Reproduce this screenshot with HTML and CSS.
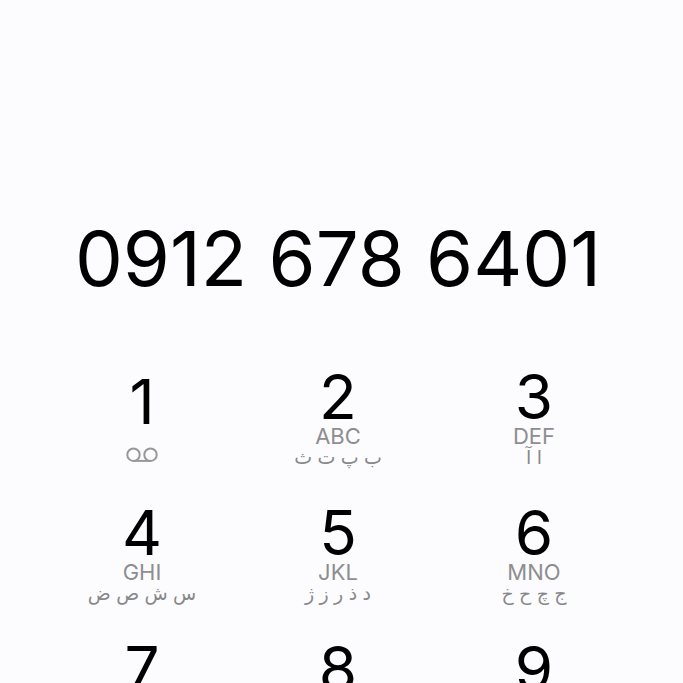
FILE: index.html
```html
<!DOCTYPE html>
<html lang="en">
<head>
<meta charset="utf-8">
<meta name="viewport" content="width=device-width, initial-scale=1">
<title>Phone</title>
<link rel="stylesheet" href="styles.css">
</head>
<body>
<main class="dialer">
  <output class="number">0912 678 6401</output>
  <div class="keypad">
    <button class="key key-voicemail" type="button">
      <span class="digit">1</span>
      <svg class="voicemail" viewBox="0 0 32 16" aria-hidden="true"><circle cx="7.5" cy="7.7" r="6.2"/><circle cx="24.5" cy="7.7" r="6.2"/><path d="M7.5 13.9h17"/></svg>
    </button>
    <button class="key" type="button"><span class="digit">2</span><span class="latin">ABC</span><span class="persian" lang="fa" dir="rtl">ب پ ت ث</span></button>
    <button class="key" type="button"><span class="digit">3</span><span class="latin">DEF</span><span class="persian" lang="fa" dir="rtl">ا آ</span></button>
    <button class="key" type="button"><span class="digit">4</span><span class="latin">GHI</span><span class="persian" lang="fa" dir="rtl">س ش ص ض</span></button>
    <button class="key" type="button"><span class="digit">5</span><span class="latin">JKL</span><span class="persian" lang="fa" dir="rtl">د ذ ر ز ژ</span></button>
    <button class="key" type="button"><span class="digit">6</span><span class="latin">MNO</span><span class="persian" lang="fa" dir="rtl">ج چ ح خ</span></button>
    <button class="key" type="button"><span class="digit">7</span></button>
    <button class="key" type="button"><span class="digit">8</span></button>
    <button class="key" type="button"><span class="digit">9</span></button>
  </div>
</main>
</body>
</html>
```
FILE: styles.css
```css
* {
  box-sizing: border-box;
}

body {
  margin: 0;
  background: #fcfcfe;
  color: #000;
  font-family: Inter, "DejaVu Sans", sans-serif;
}

.dialer {
  display: flex;
  flex-direction: column;
  height: 100vh;
  padding: 212px 51px 0 44px;
  overflow: hidden;
}

.number {
  font-size: 76px;
  line-height: 92px;
  text-align: center;
  white-space: nowrap;
}

.keypad {
  display: grid;
  grid-template-columns: repeat(3, 1fr);
  grid-auto-rows: 136px;
  margin-top: 65px;
}

.key {
  display: flex;
  flex-direction: column;
  align-items: center;
  padding: 0;
  border: 0;
  background: none;
  color: inherit;
  font: inherit;
}

.digit {
  font-size: 62px;
  line-height: 56px;
}

.latin {
  color: #8e8e90;
  font-size: 22px;
  line-height: 22px;
}

.persian {
  color: #88888a;
  font-size: 19px;
  line-height: 22px;
  white-space: nowrap;
}

.key-voicemail {
  padding-top: 5px;
}

.voicemail {
  width: 32px;
  height: 16px;
  margin-top: 17px;
  fill: none;
  stroke: #98989a;
  stroke-width: 2;
}
```
